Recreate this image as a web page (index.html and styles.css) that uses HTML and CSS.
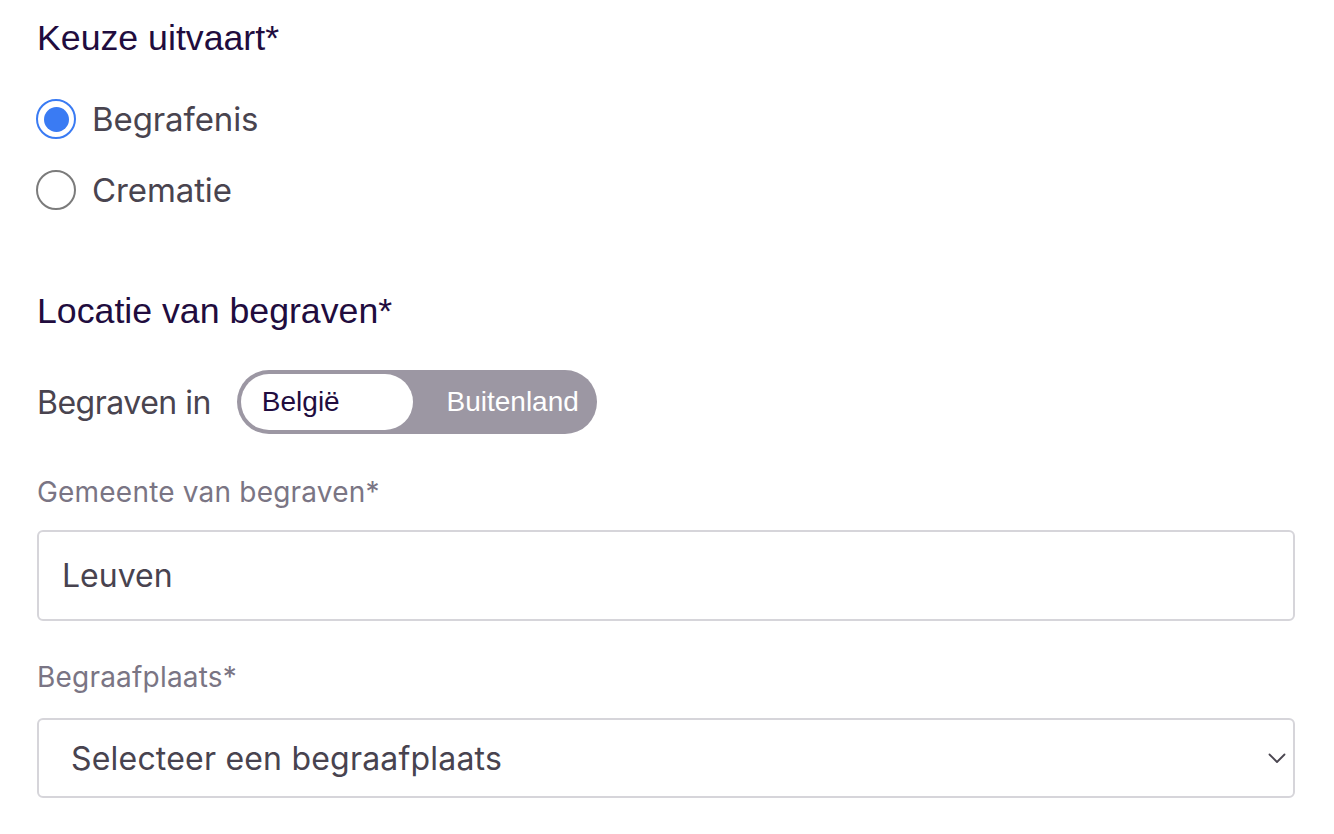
FILE: index.html
```html
<!DOCTYPE html>
<html lang="nl">
<head>
<meta charset="utf-8">
<title>Keuze uitvaart</title>
<link rel="stylesheet" href="styles.css">
</head>
<body>
<main class="form">
  <h2 class="heading heading-first">Keuze uitvaart*</h2>
  <div class="radios">
    <label class="radio-row">
      <span class="radio radio-checked"><span class="radio-dot"></span></span>
      <span class="radio-label">Begrafenis</span>
    </label>
    <label class="radio-row">
      <span class="radio"></span>
      <span class="radio-label">Crematie</span>
    </label>
  </div>

  <h2 class="heading heading-second">Locatie van begraven*</h2>
  <div class="toggle-row">
    <span class="toggle-label">Begraven in</span>
    <div class="toggle">
      <span class="toggle-opt toggle-active">België</span>
      <span class="toggle-opt toggle-inactive">Buitenland</span>
    </div>
  </div>

  <div class="field field-gemeente">
    <div class="field-label">Gemeente van begraven*</div>
    <div class="input">Leuven</div>
  </div>

  <div class="field field-plaats">
    <div class="field-label">Begraafplaats*</div>
    <div class="select">
      <span class="select-text">Selecteer een begraafplaats</span>
      <svg class="chevron" width="18" height="11" viewBox="0 0 18 11"><path d="M1.5 1.5 L9 9 L16.5 1.5" fill="none" stroke="#4a4650" stroke-width="1.8" stroke-linecap="round" stroke-linejoin="round"/></svg>
    </div>
  </div>
</main>
</body>
</html>
```

FILE: styles.css
```css
html, body {
  margin: 0;
  padding: 0;
  background: #ffffff;
}

.form {
  padding: 18px 39px 0 36px;
  font-family: "Inter", "Liberation Sans", sans-serif;
  color: #48434f;
}

.heading {
  margin: 0 0 0 1px;
  font-family: "Liberation Sans", Arial, sans-serif;
  font-weight: 400;
  font-size: 35.7px;
  line-height: 40px;
  color: #210c3e;
}

.radios {
  margin-top: 41px;
  display: flex;
  flex-direction: column;
  gap: 31px;
}

.radio-row {
  display: flex;
  align-items: center;
  height: 40px;
  gap: 16px;
}

.radio {
  box-sizing: border-box;
  width: 40px;
  height: 40px;
  border-radius: 50%;
  border: 2px solid #7b7b7b;
  display: flex;
  align-items: center;
  justify-content: center;
  flex: none;
}

.radio-checked {
  border-color: #3a7bf3;
}

.radio-dot {
  width: 25px;
  height: 25px;
  border-radius: 50%;
  background: #3a7bf3;
}

.radio-label {
  font-size: 33px;
  letter-spacing: -0.1px;
  color: #49444f;
}

.heading-second {
  margin-top: 81px;
}

.toggle-row {
  margin-top: 39px;
  margin-left: 1px;
  display: flex;
  align-items: center;
  gap: 26px;
}

.toggle-label {
  font-size: 32px;
  letter-spacing: -0.5px;
  color: #49444f;
}

.toggle {
  box-sizing: border-box;
  width: 360px;
  height: 64px;
  padding: 4px;
  border-radius: 32px;
  background: #9c97a3;
  display: flex;
  align-items: stretch;
  font-family: "Liberation Sans", Arial, sans-serif;
  font-size: 28px;
}

.toggle-opt {
  display: flex;
  align-items: center;
}

.toggle-active {
  width: 172px;
  box-sizing: border-box;
  padding-left: 21px;
  background: #ffffff;
  border-radius: 28px;
  color: #210c3e;
}

.toggle-inactive {
  flex: 1;
  justify-content: flex-end;
  padding-right: 14px;
  color: #ffffff;
}

.field {
  margin-left: 1px;
}

.field-gemeente {
  margin-top: 38px;
}

.field-plaats {
  margin-top: 36px;
}

.field-label {
  font-size: 28px;
  line-height: 40px;
  letter-spacing: 0.2px;
  color: #7a7584;
}

.input,
.select {
  box-sizing: border-box;
  border: 2px solid #d6d5da;
  border-radius: 6px;
  background: #ffffff;
  display: flex;
  align-items: center;
}

.input {
  margin-top: 18px;
  height: 91px;
  padding-left: 23px;
  font-size: 32px;
  color: #48434f;
}

.select {
  margin-top: 21px;
  height: 80px;
  padding-left: 32px;
  padding-right: 7px;
  justify-content: space-between;
  font-size: 32px;
  letter-spacing: 0.2px;
  color: #48434f;
}

.chevron {
  flex: none;
}
```
